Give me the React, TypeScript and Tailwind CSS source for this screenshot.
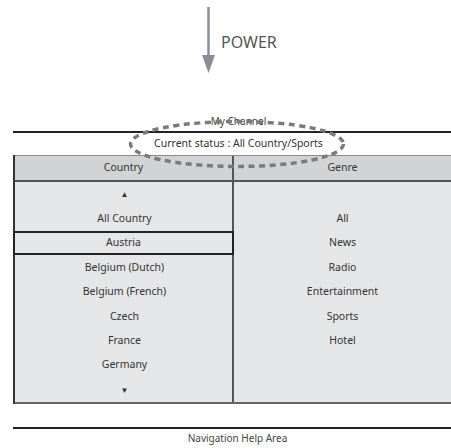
const countries = ['▲', 'All Country', 'Austria', 'Belgium (Dutch)', 'Belgium (French)', 'Czech', 'France', 'Germany', '▼']
const genres = ['', 'All', 'News', 'Radio', 'Entertainment', 'Sports', 'Hotel', '', '']

export default function App() {
  return (
    <div
      className="relative w-[451px] h-[448px] overflow-hidden bg-white text-[#333]"
      style={{ fontFamily: '"Noto Sans", "Open Sans", sans-serif' }}
    >
      {/* power arrow */}
      <div className="h-[115px] pl-[202px] pt-[5px] flex items-start">
        <svg width="13" height="68" viewBox="0 0 13 68">
          <rect x="5.25" y="2" width="2.5" height="52" fill="#8a8e99" />
          <polygon points="0,50 13,50 6.5,68" fill="#8a8e99" />
        </svg>
        <span className="ml-[6px] mt-[26px] text-[16px] leading-[22px] text-[#555]">POWER</span>
      </div>

      <div className="h-[12px] text-center text-[10px] leading-[12px] text-[#444] pl-[26px]">My Channel</div>
      <div className="mt-[4px] ml-[13px] h-[2px] bg-[#222]" />
      <div className="h-[22px] flex items-center justify-center pl-[26px] text-[10.5px]">
        Current status : All Country/Sports
      </div>

      {/* list table */}
      <div className="ml-[13px] border-l-2 border-[#333]">
        <div className="flex h-[27px] bg-[#d2d3d5] border-t border-[#8a8a8a] border-b-2 border-b-[#555] text-[10.5px]">
          <div className="w-[217px] flex items-center justify-center">Country</div>
          <div className="flex-1 border-l-2 border-[#555] flex items-center justify-center">Genre</div>
        </div>
        <div className="flex h-[222px] bg-[#e5e6e8] border-b-2 border-[#666] text-[10.5px]">
          <div className="w-[217px] grid grid-rows-[repeat(9,1fr)]">
            {countries.map((c, i) =>
              i === 2 ? (
                <div
                  key={c}
                  className="relative z-10 -ml-[2px] w-[221px] border-2 border-[#222] flex items-center justify-center"
                >
                  {c}
                </div>
              ) : (
                <div key={c} className={`flex items-center justify-center ${i === 0 || i === 8 ? 'text-[8px]' : ''}`}>
                  {c}
                </div>
              )
            )}
          </div>
          <div className="flex-1 border-l-2 border-[#555] grid grid-rows-[repeat(9,1fr)]">
            {genres.map((g, i) => (
              <div key={i} className="flex items-center justify-center">
                {g}
              </div>
            ))}
          </div>
        </div>
      </div>

      <div className="mt-[23px] ml-[13px] h-[2px] bg-[#222]" />
      <div className="mt-[3px] text-center text-[10px] leading-[12px] text-[#444] pl-[24px]">Navigation Help Area</div>

      {/* dashed callout around the current status */}
      <svg className="absolute left-0 top-0 pointer-events-none" width="451" height="448">
        <ellipse cx="237" cy="144" rx="106.5" ry="22.5" fill="none" stroke="#7a7a7a" strokeWidth="3.5" strokeDasharray="6 4.5" />
      </svg>
    </div>
  )
}
